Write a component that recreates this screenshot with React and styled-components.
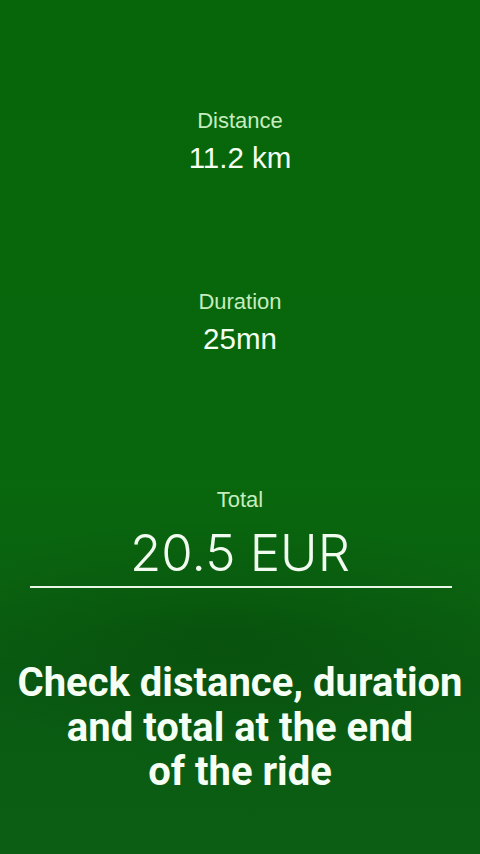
import React from "react";
import styled, { createGlobalStyle } from "styled-components";

const Global = createGlobalStyle`
  html, body { margin: 0; padding: 0; }
  body { background: #0a660f; }
`;

const Screen = styled.div`
  width: 480px;
  height: 854px;
  overflow: hidden;
  display: flex;
  flex-direction: column;
  align-items: center;
  background:
    radial-gradient(ellipse 320px 120px at 220px 640px, rgba(0, 40, 0, 0.22), rgba(0, 40, 0, 0) 100%),
    linear-gradient(180deg, #076609 0%, #08670c 55%, #0a6310 68%, #0a5b12 80%, #0b5e14 100%);
  font-family: "Liberation Sans", Arial, sans-serif;
  box-sizing: border-box;
  padding-top: 108px;
`;

const Stat = styled.div`
  display: flex;
  flex-direction: column;
  align-items: center;
  gap: ${(p) => p.$gap}px;
  margin-top: ${(p) => p.$top}px;
`;

const Label = styled.div`
  font-size: 22px;
  line-height: 26px;
  color: #c6ecbf;
`;

const Value = styled.div`
  font-size: 29.5px;
  line-height: 36px;
  color: #f4fff2;
`;

const Total = styled.div`
  font-family: "Inter", "Liberation Sans", sans-serif;
  font-weight: 300;
  font-size: 51px;
  line-height: 60px;
  color: #f2fbef;
`;

const Rule = styled.div`
  width: 422px;
  height: 2px;
  background: #e9f5e6;
  margin-top: 3px;
  margin-left: 2px;
`;

const Caption = styled.div`
  margin-top: 73px;
  font-family: Roboto, "Noto Sans", sans-serif;
  font-weight: 700;
  font-size: 40px;
  line-height: 44.5px;
  color: #f6fff4;
  text-align: center;
  white-space: nowrap;
`;

export default function App() {
  return (
    <>
      <Global />
      <Screen>
        <Stat $gap={6} $top={0}>
          <Label>Distance</Label>
          <Value>11.2 km</Value>
        </Stat>
        <Stat $gap={6} $top={113}>
          <Label>Duration</Label>
          <Value>25mn</Value>
        </Stat>
        <Stat $gap={10} $top={130}>
          <Label>Total</Label>
          <Total>20.5 EUR</Total>
        </Stat>
        <Rule />
        <Caption>
          Check distance, duration
          <br />
          and total at the end
          <br />
          of the ride
        </Caption>
      </Screen>
    </>
  );
}
